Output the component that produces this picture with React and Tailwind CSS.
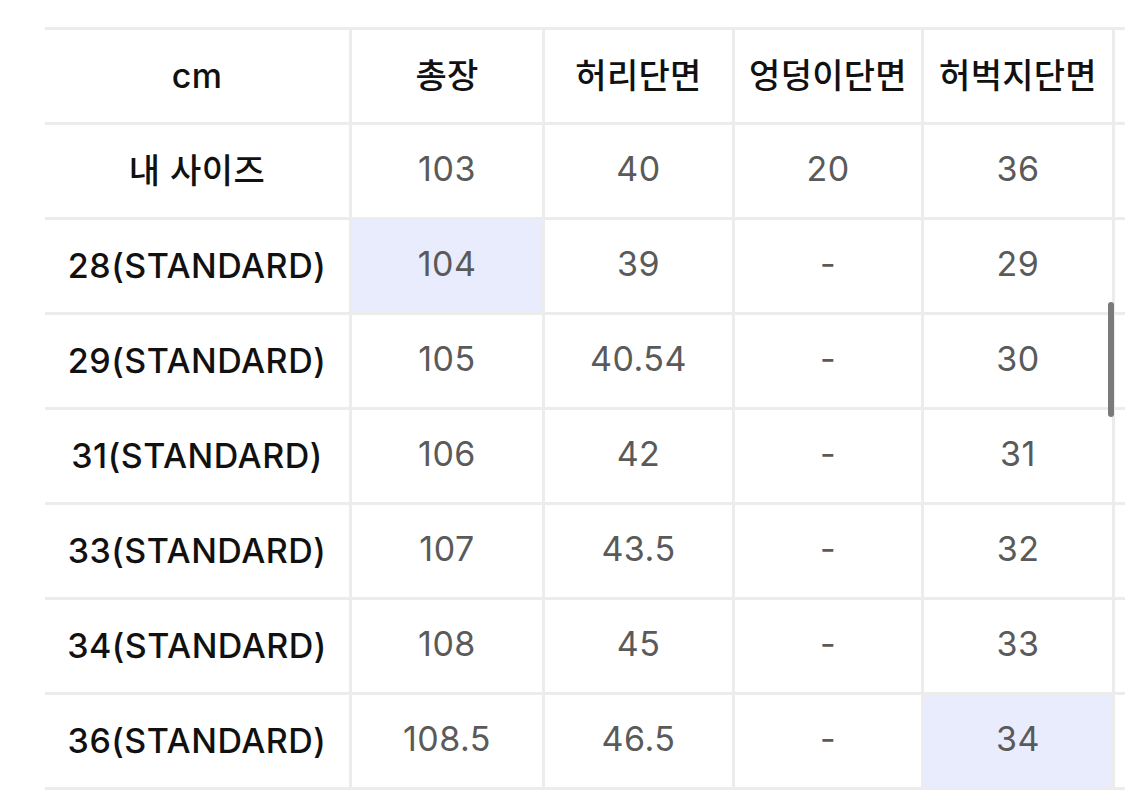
const headers = ['cm', '총장', '허리단면', '엉덩이단면', '허벅지단면', '']

const rows = [
  { label: '내 사이즈', values: ['103', '40', '20', '36'] },
  { label: '28(STANDARD)', values: ['104', '39', '-', '29'], hi: 0 },
  { label: '29(STANDARD)', values: ['105', '40.54', '-', '30'] },
  { label: '31(STANDARD)', values: ['106', '42', '-', '31'] },
  { label: '33(STANDARD)', values: ['107', '43.5', '-', '32'] },
  { label: '34(STANDARD)', values: ['108', '45', '-', '33'] },
  { label: '36(STANDARD)', values: ['108.5', '46.5', '-', '34'], hi: 3 },
]

const font = { fontFamily: 'Inter, "Noto Sans CJK KR", sans-serif' }

function App() {
  return (
    <div className="w-[1125px] h-[792px] overflow-hidden bg-white relative" style={font}>
      <div className="pt-[27px] pl-[45px]">
        <div className="grid grid-cols-[307px_193px_190px_189px_191px_200px] border-t-[3px] border-[#ececec] w-[1270px]">
          {headers.map((h, i) => (
            <div
              key={i}
              className="h-[95px] pb-[2px] flex items-center justify-center border-b-[3px] border-r-[3px] border-[#ececec] text-[34px] tracking-[0.3px] text-[#111] font-medium"
            >
              {h}
            </div>
          ))}
          {rows.map((r, ri) => (
            <Row key={ri} row={r} />
          ))}
        </div>
      </div>
      <div className="absolute left-[1108px] top-[302px] w-[6px] h-[115px] rounded-full bg-[#7a7a7a]"></div>
    </div>
  )
}

function Row({ row }) {
  return (
    <>
      <div className="h-[95px] pb-[2px] flex items-center justify-center border-b-[3px] border-r-[3px] border-[#ececec] text-[34px] tracking-[0.5px] text-[#111] font-medium">
        {row.label}
      </div>
      {row.values.map((v, i) => (
        <div
          key={i}
          className={
            'h-[95px] pb-[5px] flex items-center justify-center border-b-[3px] border-r-[3px] border-[#ececec] text-[34px] tracking-[0.5px] text-[#5a5a5a] ' +
            (row.hi === i ? 'bg-[#e9ecfc]' : 'bg-white')
          }
        >
          {v}
        </div>
      ))}
      <div className="h-[95px] border-b-[3px] border-r-[3px] border-[#ececec]"></div>
    </>
  )
}

export default App
